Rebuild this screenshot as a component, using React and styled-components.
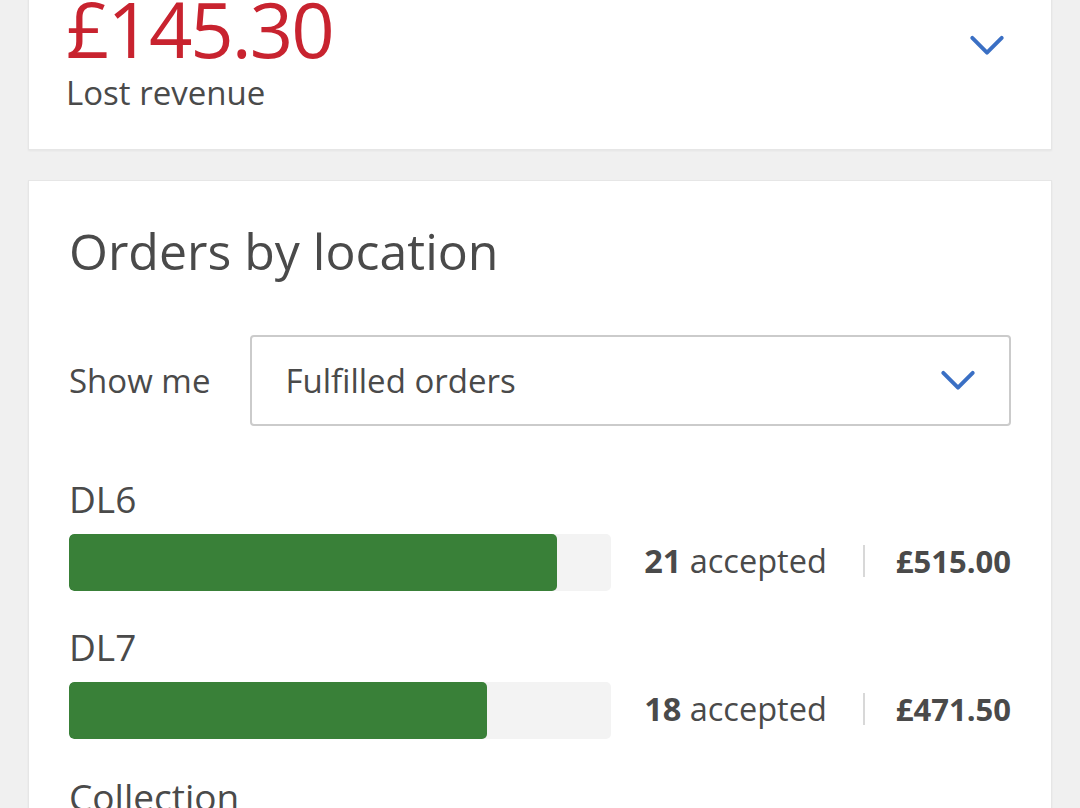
import React from 'react';
import styled, { createGlobalStyle } from 'styled-components';

const GlobalStyle = createGlobalStyle`
  body {
    margin: 0;
    background: #f0f0f0;
    font-family: "Open Sans", "Noto Sans", sans-serif;
    color: #4a4a4a;
  }
`;

const locations = [
  { name: 'DL6', accepted: 21, total: '£515.00', fill: 0.9 },
  { name: 'DL7', accepted: 18, total: '£471.50', fill: 0.771 },
];

const Chevron = ({ size = 36 }) => (
  <svg width={size} height={size * 0.6} viewBox="0 0 36 22" fill="none">
    <path d="M3 3 L18 18 L33 3" stroke="#3a6fc4" strokeWidth="4" strokeLinecap="round" strokeLinejoin="round" />
  </svg>
);

const App = () => {
  return (
    <Page>
      <GlobalStyle />
      <RevenueCard>
        <div>
          <Amount>£145.30</Amount>
          <AmountLabel>Lost revenue</AmountLabel>
        </div>
        <ChevronWrap>
          <Chevron />
        </ChevronWrap>
      </RevenueCard>

      <Card>
        <Title>Orders by location</Title>
        <FilterRow>
          <FilterLabel>Show me</FilterLabel>
          <Select>
            Fulfilled orders
            <Chevron />
          </Select>
        </FilterRow>

        {locations.map((loc) => (
          <Location key={loc.name}>
            <LocationName>{loc.name}</LocationName>
            <BarRow>
              <Track>
                <Fill style={{ width: `${loc.fill * 100}%` }} />
              </Track>
              <Stats>
                <Accepted>
                  <b>{loc.accepted}</b> accepted
                </Accepted>
                <Divider />
                <Total>{loc.total}</Total>
              </Stats>
            </BarRow>
          </Location>
        ))}
        <LocationName>Collection</LocationName>
      </Card>
    </Page>
  );
};

export default App;

const Page = styled.div`
  display: flex;
  flex-direction: column;
  gap: 30px;
  padding: 0 28px;
  margin-top: -52px;
  height: 860px;
  overflow: hidden;
`;

const Card = styled.div`
  background: #ffffff;
  border: 1px solid #e6e6e6;
  box-shadow: 0 1px 2px rgba(0, 0, 0, 0.05);
  padding: 34px 40px 40px 40px;
`;

const RevenueCard = styled(Card)`
  display: flex;
  justify-content: space-between;
  align-items: flex-start;
  padding: 38px 46px 36px 37px;
  flex-shrink: 0;
`;

const Amount = styled.div`
  font-size: 76px;
  line-height: 84px;
  color: #c8232f;
  letter-spacing: -2px;
`;

const AmountLabel = styled.div`
  font-size: 33px;
  line-height: 40px;
  margin-top: 2px;
  color: #4a4a4a;
`;

const ChevronWrap = styled.div`
  margin-top: 48px;
`;

const Title = styled.h2`
  margin: 0;
  font-weight: 400;
  font-size: 50px;
  line-height: 72px;
  color: #4a4a4a;
`;

const FilterRow = styled.div`
  display: flex;
  align-items: center;
  gap: 40px;
  margin-top: 48px;
`;

const FilterLabel = styled.div`
  font-size: 33px;
`;

const Select = styled.div`
  flex: 1;
  height: 91px;
  box-sizing: border-box;
  border: 2px solid #cbcbcb;
  border-radius: 4px;
  display: flex;
  align-items: center;
  justify-content: space-between;
  padding: 0 33px 0 33px;
  font-size: 33px;
  color: #4a4a4a;
`;

const Location = styled.div`
  margin-top: 50px;
  & + & {
    margin-top: 33px;
  }
`;

const LocationName = styled.div`
  font-size: 37px;
  line-height: 46px;
  margin-top: 35px;
  ${Location} & {
    margin-top: 0;
  }
`;

const BarRow = styled.div`
  display: flex;
  align-items: center;
  margin-top: 12px;
`;

const Track = styled.div`
  width: 542px;
  height: 57px;
  border-radius: 5px;
  background: #f3f3f3;
  overflow: hidden;
`;

const Fill = styled.div`
  height: 100%;
  background: #398038;
  border-radius: 5px;
`;

const Stats = styled.div`
  flex: 1;
  display: flex;
  align-items: center;
  justify-content: flex-end;
  font-size: 31px;
  color: #4a4a4a;
  margin-top: -4px;
`;

const Accepted = styled.div`
  font-size: 32.5px;
  b {
    font-weight: 700;
  }
`;

const Divider = styled.div`
  width: 2px;
  height: 32px;
  background: #d8d8d8;
  margin: 0 31px 0 36px;
`;

const Total = styled.div`
  font-weight: 700;
`;
